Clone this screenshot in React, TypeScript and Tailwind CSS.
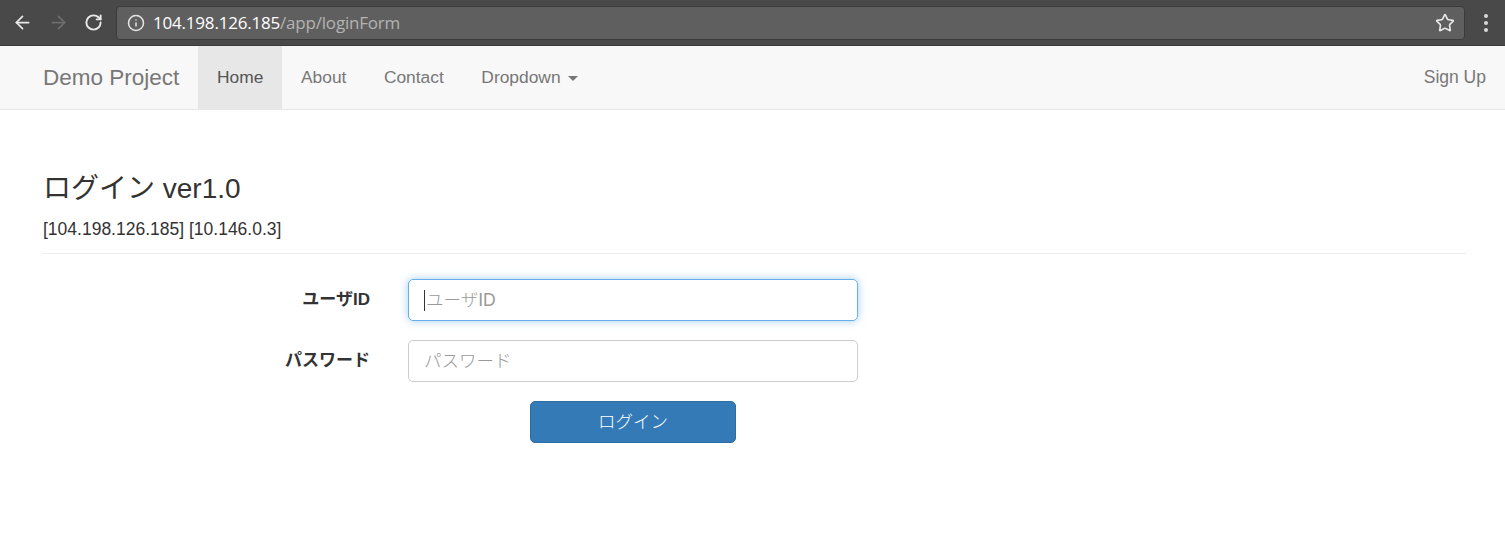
import { ArrowLeft, ArrowRight, RotateCw, Info, Star } from 'lucide-react'

const font = { fontFamily: '"Liberation Sans", "Noto Sans CJK JP", Arial, sans-serif' }

function BrowserBar() {
  return (
    <div className="flex h-[46px] items-center bg-[#494949] border-b border-[#3a3a3a]">
      <div className="flex w-[116px] items-center pl-[12px] gap-[15px]">
        <ArrowLeft size={21} strokeWidth={2} className="text-[#e8e8e8]" />
        <ArrowRight size={21} strokeWidth={2} className="text-[#6e6e6e]" />
        <RotateCw size={19} strokeWidth={2.4} className="text-[#e8e8e8]" />
      </div>
      <div className="flex h-[34px] w-[1349px] items-center rounded-[4px] border border-[#3b3b3b] bg-[#5f5f5f] pl-[10px] pr-[9px]">
        <Info size={18} strokeWidth={2} className="text-[#e6e6e6]" />
        <div className="ml-[8px] flex-1 text-[17px] tracking-[-0.2px]" style={{ fontFamily: '"Open Sans", "Noto Sans", sans-serif' }}>
          <span className="text-white">104.198.126.185</span>
          <span className="text-[#b3b3b3]">/app/loginForm</span>
        </div>
        <Star size={20} strokeWidth={2} className="text-[#e6e6e6]" />
      </div>
      <div className="flex flex-1 flex-col items-center justify-center gap-[3px] pl-[2px]">
        <span className="block h-[4px] w-[4px] rounded-full bg-[#d8d8d8]" />
        <span className="block h-[4px] w-[4px] rounded-full bg-[#d8d8d8]" />
        <span className="block h-[4px] w-[4px] rounded-full bg-[#d8d8d8]" />
      </div>
    </div>
  )
}

function Navbar() {
  const items = ['About', 'Contact']
  return (
    <div className="flex h-[64px] items-stretch border-b border-[#e7e7e7] bg-[#f8f8f8] text-[#777]">
      <div className="flex items-center pl-[43px] pr-[19px] text-[22.5px]">Demo Project</div>
      <div className="flex items-center bg-[#e7e7e7] px-[18.75px] text-[17.4px] text-[#555]">Home</div>
      {items.map((t) => (
        <div key={t} className="flex items-center px-[18.75px] text-[17.4px]">
          {t}
        </div>
      ))}
      <div className="flex items-center px-[18.75px] text-[17.4px]">
        Dropdown
        <span className="ml-[7px] mt-[2px] inline-block h-0 w-0 border-x-[5px] border-t-[5px] border-x-transparent border-t-[#777]" />
      </div>
      <div className="flex-1" />
      <div className="flex items-center pr-[19px] text-[17.5px]">Sign Up</div>
    </div>
  )
}

export default function App() {
  return (
    <div className="h-[556px] w-[1505px] overflow-hidden bg-white text-[#333]" style={font}>
      <BrowserBar />
      <Navbar />
      <div className="pl-[43px] pr-[38px] pt-[62px]">
        <h3 className="text-[28px] leading-[33px]">ログイン ver1.0</h3>
        <p className="mt-[12px] text-[17.5px] leading-[25px]">[104.198.126.185] [10.146.0.3]</p>
        <div className="mt-[11px] border-t border-[#eee]" />
        <div className="mt-[25px] flex flex-col gap-[19px]">
          <div className="flex items-center">
            <label className="w-[327px] text-right text-[17px] font-bold">ユーザID</label>
            <div className="ml-[38px] flex h-[42px] w-[450px] items-center rounded-[5px] border border-[#66afe9] px-[15px] text-[17.5px] font-light text-[#999] shadow-[0_0_8px_rgba(102,175,233,0.6)]">
              <span className="mr-[1px] inline-block h-[21px] w-px bg-[#333]" />
              ユーザID
            </div>
          </div>
          <div className="flex items-center">
            <label className="w-[327px] text-right text-[17px] font-bold">パスワード</label>
            <div className="ml-[38px] flex h-[42px] w-[450px] items-center rounded-[5px] border border-[#ccc] px-[15px] text-[17.5px] font-light text-[#999]">
              パスワード
            </div>
          </div>
          <div className="flex">
            <button className="ml-[487px] h-[42px] w-[206px] rounded-[5px] border border-[#2e6da4] bg-[#337ab7] text-[17.5px] font-light text-white">
              ログイン
            </button>
          </div>
        </div>
      </div>
    </div>
  )
}
